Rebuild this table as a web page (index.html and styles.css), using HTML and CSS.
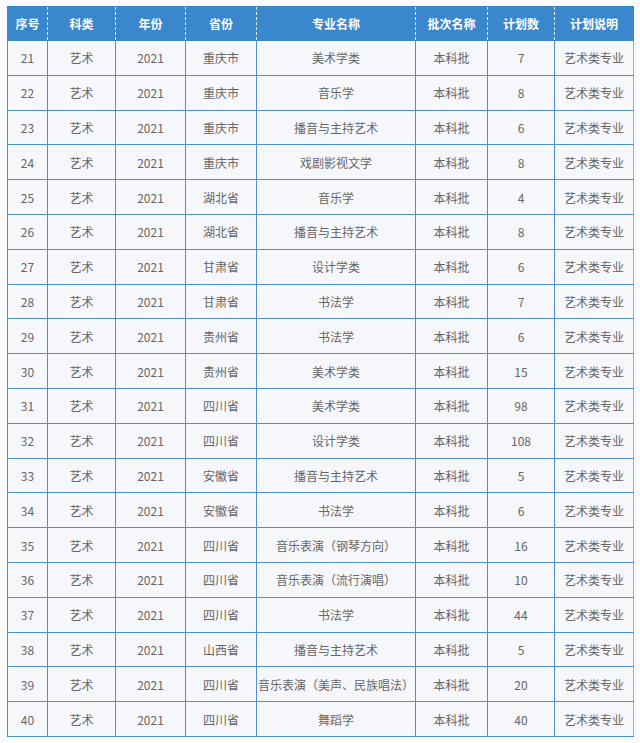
FILE: index.html
```html
<!DOCTYPE html>
<html lang="zh">
<head>
<meta charset="utf-8">
<link rel="stylesheet" href="styles.css">
</head>
<body>
<table class="plan">
<colgroup>
<col class="c1"><col class="c2"><col class="c3"><col class="c4"><col class="c5"><col class="c6"><col class="c7"><col class="c8">
</colgroup>
<thead>
<tr><th>序号</th><th>科类</th><th>年份</th><th>省份</th><th>专业名称</th><th>批次名称</th><th>计划数</th><th>计划说明</th></tr>
</thead>
<tbody>
<tr><td>21</td><td>艺术</td><td>2021</td><td>重庆市</td><td>美术学类</td><td>本科批</td><td>7</td><td>艺术类专业</td></tr>
<tr><td>22</td><td>艺术</td><td>2021</td><td>重庆市</td><td>音乐学</td><td>本科批</td><td>8</td><td>艺术类专业</td></tr>
<tr><td>23</td><td>艺术</td><td>2021</td><td>重庆市</td><td>播音与主持艺术</td><td>本科批</td><td>6</td><td>艺术类专业</td></tr>
<tr><td>24</td><td>艺术</td><td>2021</td><td>重庆市</td><td>戏剧影视文学</td><td>本科批</td><td>8</td><td>艺术类专业</td></tr>
<tr><td>25</td><td>艺术</td><td>2021</td><td>湖北省</td><td>音乐学</td><td>本科批</td><td>4</td><td>艺术类专业</td></tr>
<tr><td>26</td><td>艺术</td><td>2021</td><td>湖北省</td><td>播音与主持艺术</td><td>本科批</td><td>8</td><td>艺术类专业</td></tr>
<tr><td>27</td><td>艺术</td><td>2021</td><td>甘肃省</td><td>设计学类</td><td>本科批</td><td>6</td><td>艺术类专业</td></tr>
<tr><td>28</td><td>艺术</td><td>2021</td><td>甘肃省</td><td>书法学</td><td>本科批</td><td>7</td><td>艺术类专业</td></tr>
<tr><td>29</td><td>艺术</td><td>2021</td><td>贵州省</td><td>书法学</td><td>本科批</td><td>6</td><td>艺术类专业</td></tr>
<tr><td>30</td><td>艺术</td><td>2021</td><td>贵州省</td><td>美术学类</td><td>本科批</td><td>15</td><td>艺术类专业</td></tr>
<tr><td>31</td><td>艺术</td><td>2021</td><td>四川省</td><td>美术学类</td><td>本科批</td><td>98</td><td>艺术类专业</td></tr>
<tr><td>32</td><td>艺术</td><td>2021</td><td>四川省</td><td>设计学类</td><td>本科批</td><td>108</td><td>艺术类专业</td></tr>
<tr><td>33</td><td>艺术</td><td>2021</td><td>安徽省</td><td>播音与主持艺术</td><td>本科批</td><td>5</td><td>艺术类专业</td></tr>
<tr><td>34</td><td>艺术</td><td>2021</td><td>安徽省</td><td>书法学</td><td>本科批</td><td>6</td><td>艺术类专业</td></tr>
<tr><td>35</td><td>艺术</td><td>2021</td><td>四川省</td><td>音乐表演（钢琴方向）</td><td>本科批</td><td>16</td><td>艺术类专业</td></tr>
<tr><td>36</td><td>艺术</td><td>2021</td><td>四川省</td><td>音乐表演（流行演唱）</td><td>本科批</td><td>10</td><td>艺术类专业</td></tr>
<tr><td>37</td><td>艺术</td><td>2021</td><td>四川省</td><td>书法学</td><td>本科批</td><td>44</td><td>艺术类专业</td></tr>
<tr><td>38</td><td>艺术</td><td>2021</td><td>山西省</td><td>播音与主持艺术</td><td>本科批</td><td>5</td><td>艺术类专业</td></tr>
<tr><td>39</td><td>艺术</td><td>2021</td><td>四川省</td><td>音乐表演（美声、民族唱法）</td><td>本科批</td><td>20</td><td>艺术类专业</td></tr>
<tr><td>40</td><td>艺术</td><td>2021</td><td>四川省</td><td>舞蹈学</td><td>本科批</td><td>40</td><td>艺术类专业</td></tr>
</tbody>
</table>
</body>
</html>
```
FILE: styles.css
```css
html, body {
  margin: 0;
  background: #fafbfd;
}
body {
  padding: 6px 7px 0 7px;
  font-family: "Noto Sans CJK SC", "Noto Sans", sans-serif;
}
.plan {
  border-collapse: collapse;
  table-layout: fixed;
  width: 626px;
  font-size: 12px;
}
.c1 { width: 40px; }
.c2 { width: 68px; }
.c3 { width: 70px; }
.c4 { width: 71px; }
.c5 { width: 159px; }
.c6 { width: 72px; }
.c7 { width: 67px; }
.c8 { width: 79px; }
.plan th {
  background: #3a87cd;
  color: #fff;
  font-weight: bold;
  height: 33px;
  padding: 0;
  text-align: center;
  border-left: 1px dashed #dbe9f7;
  border-top: 1px solid #3a87cd;
  border-bottom: 1px solid #3a87cd;
}
.plan th:first-child {
  border-left: 1px solid #3a87cd;
}
.plan th:last-child {
  border-right: 1px solid #3a87cd;
}
.plan td {
  background: #f6f7fb;
  color: #666;
  height: 33.8px;
  padding: 0;
  text-align: center;
  border: 1px solid #4f8fcc;
  white-space: nowrap;
}
.plan td:last-child {
  border-right-color: #9fb0c8;
}
```
